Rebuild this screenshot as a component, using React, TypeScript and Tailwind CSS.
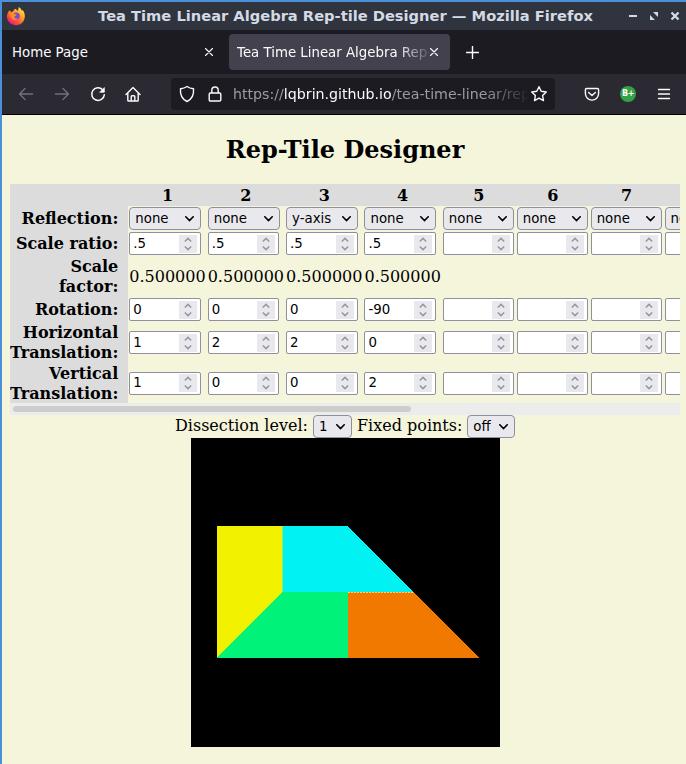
import type { ReactNode } from "react";

const sans = "font-['DejaVu_Sans',sans-serif]";

function Icon({ children, className = "", size = 18 }: { children: ReactNode; className?: string; size?: number }) {
  return (
    <svg
      width={size}
      height={size}
      viewBox={`0 0 ${size} ${size}`}
      fill="none"
      stroke="currentColor"
      strokeWidth="1.4"
      strokeLinecap="round"
      strokeLinejoin="round"
      className={`shrink-0 ${className}`}
    >
      {children}
    </svg>
  );
}

function FirefoxLogo() {
  return (
    <svg width="20" height="20" viewBox="0 0 20 20" className="shrink-0">
      <defs>
        <linearGradient id="flame" x1="0.85" y1="0.05" x2="0.2" y2="0.95">
          <stop offset="0" stopColor="#fff044" />
          <stop offset="0.4" stopColor="#ff9a26" />
          <stop offset="0.75" stopColor="#ff4540" />
          <stop offset="1" stopColor="#e31587" />
        </linearGradient>
      </defs>
      <path
        d="M3.4 4.2 5.4 6l1.200-.3C7.600 4.500 8.600 3.300 9.300 2.800L12 5 12.700 1c2 1 2.900 2.900 3.300 4l.8-1c1.500 2.200 2.200 4.400 2 7-.4 5-4.300 8.300-8.900 8.200C5 19.100.8 15.300.9 10.500 1 8 1.900 6.500 3.400 4.200Z"
        fill="url(#flame)"
      />
      <circle cx="10.200" cy="10.200" r="3.600" fill="#7a4bd0" />
      <path d="M3.500 7.500c2-1.200 4-.7 5.500.7l1.700.2c.1 1-1.700 1.400-2.200 2.300-.2 1.500 1.500 2.400 3.500 1.500-.7 2-4.500 2.500-6.300.2C4.300 11 3.700 9.500 3.500 7.500Z" fill="#ff8a2a" />
    </svg>
  );
}

function TitleBar() {
  return (
    <div className="flex h-7 items-center bg-[#2f343f] pl-1 pr-[6px] text-[#d3dae3]">
      <FirefoxLogo />
      <div className={`flex-1 pl-[37px] text-center text-[14.67px] leading-7 font-bold whitespace-nowrap ${sans}`}>
        Tea Time Linear Algebra Rep-tile Designer — Mozilla Firefox
      </div>
      <svg width="52" height="10" viewBox="0 0 52 10" fill="currentColor" className="shrink-0">
        <path d="M1 4h8v2H1z" />
        <path d="M25 1h5v5zM22 4l5 5h-5z" />
        <path d="m43.500 1.500 7 7m0-7-7 7" stroke="currentColor" strokeWidth="2.400" />
      </svg>
    </div>
  );
}

function CloseMark() {
  return (
    <Icon size={10} className="text-[#fbfbfe]">
      <path d="m1.500 1.500 7 7m0-7-7 7" strokeWidth="1.100" />
    </Icon>
  );
}

function TabBar() {
  return (
    <div className={`flex h-11 items-center bg-[#1c1b22] text-[13.33px] text-[#fbfbfe] ${sans}`}>
      <div className="flex w-[227px] items-center justify-between pl-[10px] pr-[15px]">
        <span className="pt-[2px]">Home Page</span>
        <CloseMark />
      </div>
      <div className="flex h-9 w-[221px] items-center rounded-[4px] bg-[#42414d] pl-2">
        <span className="w-[192px] overflow-hidden pt-[2px] whitespace-nowrap [mask-image:linear-gradient(to_right,black_160px,transparent_196px)]">
          Tea Time Linear Algebra Rep-tile Designer
        </span>
        <CloseMark />
      </div>
      <Icon size={13} className="ml-[16px]">
        <path d="M6.500.5v12M.5 6.500h12" />
      </Icon>
    </div>
  );
}

function ToolBar() {
  return (
    <div className="flex h-[41px] items-center border-b border-black bg-[#2b2a33] text-[#fbfbfe]">
      <Icon className="ml-[15px] text-[#72717a]">
        <path d="M15.500 9h-13m5.500-5.500L2.500 9 8 14.500" />
      </Icon>
      <Icon className="ml-[18px] text-[#72717a]">
        <path d="M2.500 9h13M10 3.500 15.500 9 10 14.500" />
      </Icon>
      <Icon className="ml-[18px]">
        <path d="M13.600 4.800A6.300 6.300 0 1 0 15.300 9.800" strokeWidth="1.500" />
        <path d="M15.300 3v4.200h-4.200z" fill="currentColor" strokeWidth=".8" />
      </Icon>
      <Icon className="ml-[17px]">
        <path d="M2 9.500 9 2.500l7 7M3.800 8v7.200c0 .5.300.8.800.8h8.800c.5 0 .8-.3.800-.8V8M7.200 15.800v-4.300c0-.5.300-.8.800-.8h2c.5 0 .8.300.8.800v4.300" />
      </Icon>
      <div className={`ml-[29px] flex h-8 w-[384px] items-center rounded-[4px] bg-[#1c1b22] pl-[7px] pr-[6px] ${sans}`}>
        <Icon>
          <path d="M9 1.500c2 1.400 4 2 6.500 2.300.5 5.400-1.500 10.400-6.500 12.700-5-2.300-7-7.300-6.500-12.700C5 3.500 7 2.900 9 1.500Z" />
        </Icon>
        <Icon className="ml-[10px]">
          <path d="M5.800 8V5.200a3.200 3.200 0 0 1 6.400 0V8M4.400 8h9.200c.7 0 1.200.5 1.200 1.200v5.600c0 .7-.5 1.200-1.200 1.200H4.400c-.7 0-1.200-.5-1.200-1.200V9.200C3.200 8.500 3.700 8 4.400 8Z" />
        </Icon>
        <span className="ml-[9px] w-[294px] overflow-hidden text-[14.2px] leading-6 whitespace-nowrap text-[#9c9ba3] [mask-image:linear-gradient(to_right,black_252px,transparent_298px)]">
          https://<span className="text-[#fbfbfe]">lqbrin.github.io</span>/tea-time-linear/rep
        </span>
        <Icon className="ml-[3px]">
          <path d="m9 1.700 2.200 4.600 5.100.7-3.700 3.500.9 5.100L9 13.200l-4.500 2.400.9-5.100L1.700 7l5.100-.7Z" />
        </Icon>
      </div>
      <Icon className="ml-[28px]">
        <path d="M3.600 3.500h10.800c.7 0 1.200.5 1.200 1.200v3.800a6.600 6.600 0 0 1-13.200 0V4.700c0-.7.500-1.200 1.200-1.200ZM5.600 7.500 9 10.600l3.400-3.100" />
      </Icon>
      <span className={`ml-[19px] flex size-4 items-center justify-center rounded-full bg-[#34a048] text-[8px] leading-4 font-bold tracking-[-0.5px] text-white ${sans}`}>
        B+
      </span>
      <Icon className="ml-[19px]">
        <path d="M3.500 4.500h11M3.500 9h11M3.500 13.500h11" />
      </Icon>
    </div>
  );
}

function Select({ value, className }: { value: string; className: string }) {
  return (
    <div
      className={`flex h-[23px] shrink-0 items-center justify-between rounded-[4px] border border-[#8f8f9d] bg-[#e9e9ed] pl-[5px] pr-[6px] text-[13.33px] leading-5 text-black ${sans} ${className}`}
    >
      <span>{value}</span>
      <svg width="9" height="6" viewBox="0 0 9 6" fill="none" stroke="black" strokeWidth="1.600" className="mt-px">
        <path d="M.8.8 4.500 4.500 8.200.8" strokeLinecap="round" />
      </svg>
    </div>
  );
}

function NumberInput({ value, className }: { value: string; className: string }) {
  return (
    <div className={`flex h-[23px] items-center justify-between rounded-[2px] border border-[#8f8f9d] bg-white pl-[3px] pr-[3px] text-[13.33px] leading-5 text-black ${sans} ${className}`}>
      <span>{value}</span>
      <span className="flex h-[18px] w-[18px] items-center justify-center bg-[#e9e9ed]">
        <svg width="8" height="14" viewBox="0 0 8 14" fill="none" stroke="#9696a0" strokeWidth="1.500">
          <path d="M.8 4.500 4 1.400l3.200 3.100M.8 9.500 4 12.600l3.200-3.100" />
        </svg>
      </span>
    </div>
  );
}

const columns = [1, 2, 3, 4, 5, 6, 7, 8];
const reflections = ["none", "none", "y-axis", "none", "none", "none", "none", "none"];

type Row = { label: string[]; height: string; values: string[]; kind: "select" | "number" | "text" };

const rows: Row[] = [
  { label: ["Reflection:"], height: "h-[25px]", values: reflections, kind: "select" },
  { label: ["Scale ratio:"], height: "h-[25px]", values: [".5", ".5", ".5", ".5"], kind: "number" },
  { label: ["Scale", "factor:"], height: "h-[41px]", values: ["0.500000", "0.500000", "0.500000", "0.500000"], kind: "text" },
  { label: ["Rotation:"], height: "h-[25px]", values: ["0", "0", "0", "-90"], kind: "number" },
  { label: ["Horizontal", "Translation:"], height: "h-[41px]", values: ["1", "2", "2", "0"], kind: "number" },
  { label: ["Vertical", "Translation:"], height: "h-[40px]", values: ["1", "0", "0", "2"], kind: "number" },
];

const grid = "grid grid-cols-[118.300px_repeat(4,78.400px)_repeat(4,73.900px)]";

function Cell({ row, index }: { row: Row; index: number }) {
  const value = row.values[index] ?? "";
  if (row.kind === "select") return <Select value={value} className={index < 4 ? "w-[72px]" : "w-[71px]"} />;
  if (row.kind === "text") return <span className="whitespace-nowrap">{value}</span>;
  return <NumberInput value={value} className={index < 4 ? "w-[71.500px]" : "w-[71px]"} />;
}

function ParameterTable() {
  return (
    <div className="ml-2 w-[670px] overflow-hidden">
      <div className={`${grid} h-[22px] w-[727.500px] bg-[#dcdcdc] font-bold`}>
        <span />
        {columns.map((n) => (
          <span key={n} className="text-center leading-[23px]">{n}</span>
        ))}
      </div>
      {rows.map((row) => (
        <div key={row.label.join(" ")} className={`${grid} ${row.height}`}>
          <div className="flex flex-col justify-center bg-[#dcdcdc] pr-[10px] text-right leading-5 font-bold whitespace-nowrap">
            {row.label.map((line) => (
              <span key={line} className={row.label[0] === "Vertical" ? "translate-y-px" : ""}>{line}</span>
            ))}
          </div>
          {columns.map((n, index) => (
            <div key={n} className="flex items-center pl-px">
              <Cell row={row} index={index} />
            </div>
          ))}
        </div>
      ))}
      <div className="flex h-3 items-center bg-[#ececec] pl-[3px]">
        <div className="h-[6px] w-[398px] rounded-full bg-[#cdcdcd]" />
      </div>
    </div>
  );
}

function TileCanvas() {
  return (
    <svg width="309" height="309" viewBox="0 0 309 309" shapeRendering="crispEdges" className="mx-auto block bg-black">
      <path d="M26 88h65.500v66L26 219.500z" fill="#f2f200" />
      <path d="M91.500 88H156.500l66 66H91.500z" fill="#00f2f2" />
      <path d="M91.500 154H157v66H26z" fill="#00f279" />
      <path d="M157 154h66l65.500 66H157z" fill="#f27900" />
      <path d="M157 154.500h66" stroke="#f2d679" strokeDasharray="2 1" />
      <path d="M91.500 88v66" stroke="#79f279" />
    </svg>
  );
}

export default function App() {
  return (
    <div className="h-[764px] w-[686px] overflow-hidden border-t-2 border-l-2 border-[#4a90d9] bg-[#f5f5dc] font-['DejaVu_Serif',serif] text-base text-black">
      <TitleBar />
      <TabBar />
      <ToolBar />
      <h1 className="mt-5 mb-[19px] pl-[2px] text-center text-2xl leading-[30px] font-bold">Rep-Tile Designer</h1>
      <ParameterTable />
      <div className="flex h-[23px] items-center pl-[173px] whitespace-nowrap">
        <span className="pb-[2px] leading-5">Dissection level:</span>
        <Select value="1" className="ml-[5px] w-[39px]" />
        <span className="ml-[5px] pb-[2px] leading-5">Fixed points:</span>
        <Select value="off" className="ml-[5px] w-[48px]" />
      </div>
      <div className="pl-[3px]">
        <TileCanvas />
      </div>
    </div>
  );
}
